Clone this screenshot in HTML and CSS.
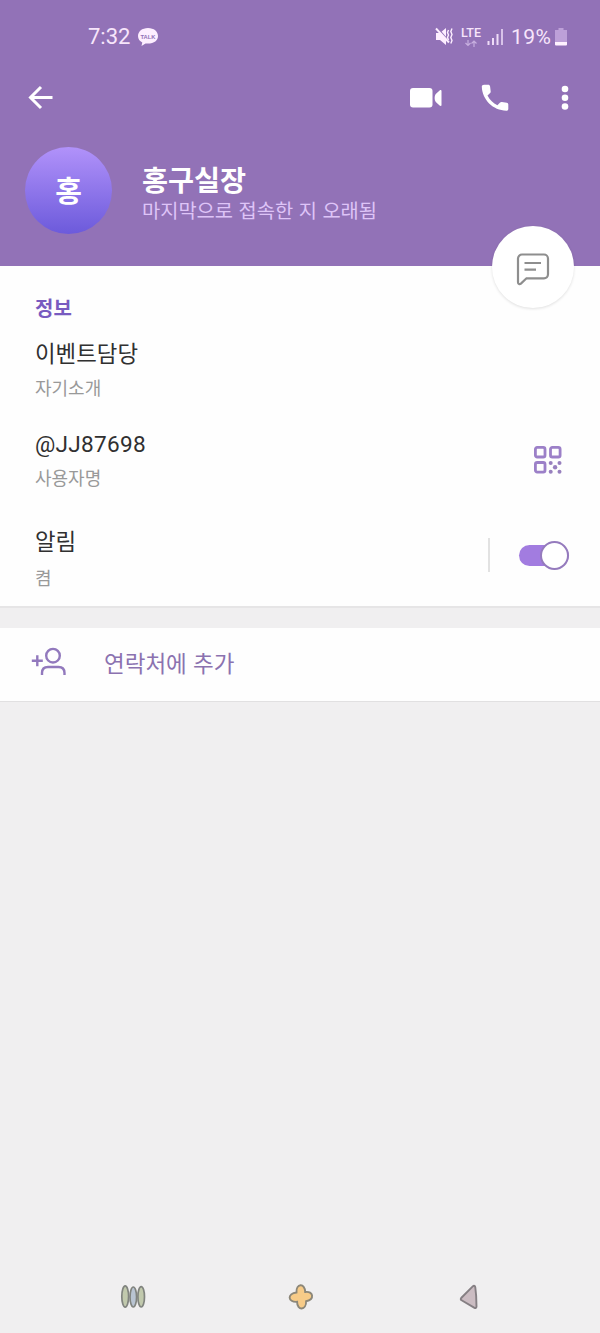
FILE: index.html
```html
<!DOCTYPE html>
<html lang="ko">
<head>
<meta charset="utf-8">
<title>홍구실장</title>
<link rel="stylesheet" href="styles.css">
</head>
<body>
<div class="screen">
  <header class="header">
    <div class="status">
      <span class="time">7:32</span>
      <svg class="talk" width="22" height="20" viewBox="0 0 22 20"><path d="M11 1C5 1 1 4.600 1 9c0 3 1.700 5.200 4.300 6.500L4.500 19l4-2.500c8 .8 12.500-2.700 12.500-7.500 0-4.400-4-8-10-8z" fill="#fdeeff"/><text x="11" y="11.500" text-anchor="middle" textLength="15" lengthAdjust="spacingAndGlyphs" class="talk-text">TALK</text></svg>
      <span class="spacer"></span>
      <svg width="19" height="19" viewBox="0 0 19 19"><path d="M1 6h4l6-5v17l-6-5H1z" fill="#fdeeff"/><path d="M3 1.500l12 14" stroke="#9272b7" stroke-width="1.400"/><path d="M1 1.500l13 14" stroke="#fdeeff" stroke-width="1.900"/><path d="M13.500 3l-1 2.500 1 2.500-1 2.500 1 2.500M17 1.500L15.800 4.500 17 7.500l-1.200 3 1.200 3-1.200 3" fill="none" stroke="#fdeeff" stroke-width="1.400"/></svg>
      <span class="lte"><span>LTE</span><svg width="14" height="7" viewBox="0 0 14 7"><path d="M4 0v5M1.500 3L4 5.500 6.500 3M10 7V1M7.500 3.500L10 1l2.500 2.500" fill="none" stroke="#c7afdf" stroke-width="1.200"/></svg></span>
      <svg class="signal" width="17" height="17" viewBox="0 0 17 17"><path d="M1.500 13v4M6 10v7M10.500 6v11" stroke="#eedcf7" stroke-width="2"/><path d="M15 1v16" stroke="#d8c3e9" stroke-width="2"/></svg>
      <span class="percent">19%</span>
      <svg class="battery" width="12" height="18" viewBox="0 0 12 18"><path d="M3.500 0h5v2H12v13H0V2h3.500z" fill="#bda0d8"/><path d="M0 14h12v2.500a1 1 0 0 1-1 1H1a1 1 0 0 1-1-1z" fill="#fff2ff"/></svg>
    </div>
    <nav class="toolbar">
      <svg width="26" height="26" viewBox="0 0 26 26"><path d="M24.500 12.500H3M13 2L2.500 12.500 13 23" fill="none" stroke="#fff" stroke-width="3"/></svg>
      <span class="spacer"></span>
      <svg class="video" width="34" height="22" viewBox="0 0 34 22"><rect x="1" y="1" width="22.500" height="19.500" rx="3" fill="#fff"/><path d="M32.500 3.800v14.400c0 1-1.200 1-1.900.4l-3.800-3.700c-1.500-1.500-1.500-6.300 0-7.800l3.800-3.700c.7-.7 1.900-.6 1.900.4z" fill="#fff"/></svg>
      <svg class="phone" width="28" height="28" viewBox="0 0 28 28"><path d="M3 .8h4.200c1 0 1.700.6 1.900 1.600l.6 5c.1.800-.2 1.300-.8 1.900L6.500 11.500c2.400 4.600 5.600 7.500 9.900 9.700l2.700-2.600c.5-.5 1-.7 1.800-.6l4.800.7c1 .2 1.600.8 1.600 1.800v4.400c0 1.100-.8 1.800-1.900 1.800C12 26.700 1.100 15.500.8 2.600.8 1.500 1.800.8 3 .8z" fill="#fff"/></svg>
      <svg class="more" width="8" height="26" viewBox="0 0 8 26"><circle cx="4" cy="4" r="3.300" fill="#fff"/><circle cx="4" cy="12.700" r="3.300" fill="#fff"/><circle cx="4" cy="21.500" r="3.300" fill="#fff"/></svg>
    </nav>
    <div class="profile">
      <div class="avatar">홍</div>
      <div class="who">
        <h1 class="name">홍구실장</h1>
        <p class="seen">마지막으로 접속한 지 오래됨</p>
      </div>
    </div>
    <div class="fab"><svg width="34" height="34" viewBox="0 0 34 34"><path d="M6 2.500h22a4 4 0 0 1 4 4v15.800a4 4 0 0 1-4 4H10.500l-5.600 5.300c-1.200 1-2.900.6-2.900-1.300V6.500a4 4 0 0 1 4-4z" fill="none" stroke="#8e8e8e" stroke-width="2.200"/><path d="M8.500 11h16.500M8.500 17.700h11.500" stroke="#8e8e8e" stroke-width="2.200"/></svg></div>
  </header>

  <main>
    <section class="info">
      <h2 class="heading">정보</h2>
      <div class="row bio"><div><p class="value">이벤트담당</p><p class="label">자기소개</p></div></div>
      <div class="row user">
        <div><p class="value latin">@JJ87698</p><p class="label">사용자명</p></div>
        <svg class="qr" width="30" height="30" viewBox="0 0 30 30"><g fill="none" stroke="#9c80c8" stroke-width="2.800"><rect x="2.400" y="2.400" width="9.600" height="9.600" rx="1.800"/><rect x="17.500" y="2.400" width="9.600" height="9.600" rx="1.800"/><rect x="2.400" y="17.500" width="9.600" height="9.600" rx="1.800"/></g><g fill="#9880be"><circle cx="17.700" cy="18" r="2"/><circle cx="26.500" cy="18" r="2"/><circle cx="22.100" cy="22.300" r="2.200"/><circle cx="17.700" cy="26.700" r="2"/><circle cx="26.500" cy="26.700" r="2"/></g></svg>
      </div>
      <div class="row notify">
        <div><p class="value">알림</p><p class="label">켬</p></div>
        <div class="control"><span class="divider"></span><span class="switch"><span class="knob"></span></span></div>
      </div>
    </section>
    <section class="contact">
      <svg width="36" height="30" viewBox="0 0 36 30"><g fill="none" stroke="#9279bd" stroke-width="2.400"><circle cx="22" cy="8.700" r="6.800"/><path d="M11 28v-2c0-4.200 2.800-6 6-6h10.500c3.500 0 6 2 6 6v2M.8 13.700h11M6.300 8.200v11"/></g></svg>
      <span class="add">연락처에 추가</span>
    </section>
  </main>

  <footer class="nav">
    <svg width="26" height="26" viewBox="0 0 26 26"><g stroke="#81847f" stroke-width="1.700"><ellipse cx="5.200" cy="12.500" rx="3.400" ry="10.600" fill="#c1c9ad"/><ellipse cx="13.300" cy="13" rx="3.300" ry="10" fill="#b9c4d2"/><ellipse cx="21.200" cy="12.800" rx="3.300" ry="10.200" fill="#c1c9ad"/></g></svg>
    <svg width="26" height="26" viewBox="0 0 26 26"><path d="M8.500 8.500C7.800-.5 17-1.500 17.200 8c8.200-1.300 9.800 7.500.9 9.300C18.500 26.500 9 27 9.100 17.800-.5 18.500-1 9.500 8.500 8.500z" fill="#f7cb88" stroke="#8c8779" stroke-width="1.900"/></svg>
    <svg width="20" height="26" viewBox="0 0 20 26"><path d="M14 2.200L2.200 14c-.7.900-.6 1.700.4 2.300l12.900 7.500c1 .5 2 0 2-1.200 0-7-.3-13-1.200-19.300-.2-1.500-1.300-2-2.300-1.100z" fill="#cbbcc2" stroke="#857f83" stroke-width="1.900"/></svg>
  </footer>
</div>
</body>
</html>
```
FILE: styles.css
```css
* { box-sizing: border-box; }
body, h1, h2, p { margin: 0; }
body { font-family: "Noto Sans CJK KR", sans-serif; color: #303030; }
svg { display: block; flex: none; }
.screen { width: 600px; height: 1333px; display: flex; flex-direction: column; background: #f0eff0; overflow: hidden; }
.spacer { flex: 1; }

.header { position: relative; height: 266px; background: #9272b7; color: #fff; }
.status { height: 73px; display: flex; align-items: center; padding: 0 33px 0 88px; font-family: Roboto, sans-serif; font-size: 22px; color: #f7e5fb; }
.time { width: 43px; line-height: 26px; }
.talk { margin-left: 6px; }
.talk-text { font: bold 6px "Liberation Sans", sans-serif; fill: #9272b7; }
.lte { width: 22px; height: 20px; margin-left: 6px; display: flex; flex-direction: column; align-items: center; font-size: 12.500px; font-weight: 500; line-height: 12px; }
.lte svg { margin-top: 1px; }
.signal { margin-left: 5px; }
.percent { width: 42px; margin-left: 7px; font-size: 21px; letter-spacing: .5px; }
.battery { margin-left: 2px; }

.toolbar { height: 50px; display: flex; align-items: center; padding: 0 31px 0 28px; }
.phone { margin-left: 38px; }
.more { margin-left: 52px; }

.profile { display: flex; align-items: center; padding: 24px 0 0 25px; }
.avatar { width: 87px; height: 87px; border-radius: 50%; background: linear-gradient(#b192fa, #6c5adb); text-align: center; font-size: 29px; font-weight: 700; line-height: 84px; }
.who { margin-left: 30px; padding-top: 5px; }
.name { font-size: 28.300px; line-height: 34px; font-weight: 700; }
.seen { font-size: 19.800px; line-height: 28px; color: #dec4f7; white-space: nowrap; }
.fab { position: absolute; right: 26px; top: 226px; width: 82px; height: 82px; border-radius: 50%; background: #fff; display: flex; align-items: center; justify-content: center; padding-top: 4px; box-shadow: 0 1px 3px rgba(0, 0, 0, .12); }

.info { height: 342px; padding: 26px 31px 0 35px; background: #fefefe; border-bottom: 2px solid #e6e5e6; }
.heading { font-size: 20px; line-height: 32px; height: 30px; font-weight: 700; color: #785bc0; }
.row { display: flex; justify-content: space-between; }
.value { font-size: 22.400px; line-height: 32px; }
.label { font-size: 18px; line-height: 28px; color: #999; margin-top: 4px; }
.bio { padding-top: 14px; }
.bio .label { margin-top: 5px; }
.user { padding-top: 26px; }
.notify { padding-top: 33px; }
.notify .label { margin-top: 7px; }
.latin { font-family: Roboto, sans-serif; font-size: 22.600px; line-height: 35px; letter-spacing: .3px; }
.user .label { margin-top: 1px; }
.qr { margin: 18px 6px 0 0; }
.control { display: flex; align-items: center; height: 34px; margin-top: 14px; }
.divider { width: 2px; height: 34px; background: #e2e2e2; margin-right: 29px; }
.switch { width: 50px; height: 21px; border-radius: 11px; background: #a27ce0; display: flex; align-items: center; justify-content: flex-end; }
.knob { width: 29px; height: 29px; flex: none; border: 2.500px solid #957bbd; border-radius: 50%; background: #fff; }

.contact { height: 74px; margin-top: 20px; background: #fefefe; border-bottom: 1px solid #e1e0e1; display: flex; align-items: center; padding: 0 0 5px 31px; }
.add { margin-left: 37px; font-size: 22.500px; line-height: 32px; color: #8b72b0; }

.nav { margin-top: auto; height: 73px; display: grid; grid-template-columns: repeat(3, 168px); justify-content: center; justify-items: center; align-items: center; padding-left: 2px; }
```
